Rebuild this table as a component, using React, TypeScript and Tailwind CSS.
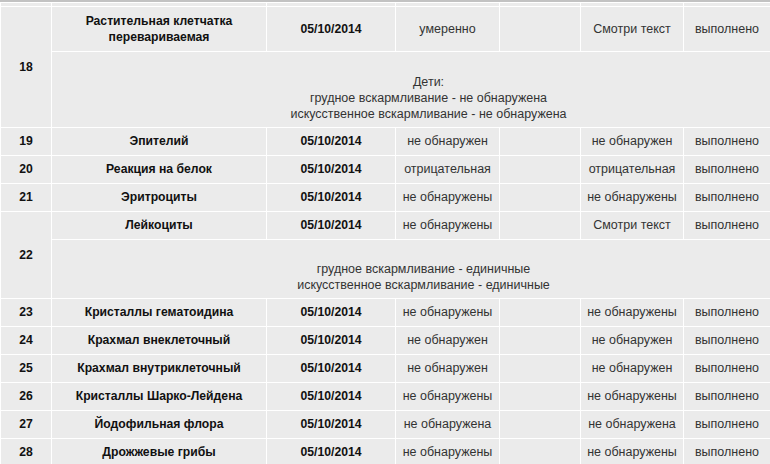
const rows = [
  { n: '19', name: 'Эпителий', res: 'не обнаружен', ref: 'не обнаружен' },
  { n: '20', name: 'Реакция на белок', res: 'отрицательная', ref: 'отрицательная' },
  { n: '21', name: 'Эритроциты', res: 'не обнаружены', ref: 'не обнаружены' },
];

const rows2 = [
  { n: '23', name: 'Кристаллы гематоидина', res: 'не обнаружены', ref: 'не обнаружены' },
  { n: '24', name: 'Крахмал внеклеточный', res: 'не обнаружен', ref: 'не обнаружен' },
  { n: '25', name: 'Крахмал внутриклеточный', res: 'не обнаружен', ref: 'не обнаружен' },
  { n: '26', name: 'Кристаллы Шарко-Лейдена', res: 'не обнаружены', ref: 'не обнаружены' },
  { n: '27', name: 'Йодофильная флора', res: 'не обнаружена', ref: 'не обнаружена' },
  { n: '28', name: 'Дрожжевые грибы', res: 'не обнаружены', ref: 'не обнаружены' },
];

const cell = 'bg-[#ebebeb] p-0 text-center align-middle';
const bold = 'font-bold text-[#111] text-[12.2px]';

function Row({ n, name, res, refVal }: { n: string; name: string; res: string; refVal: string }) {
  return (
    <tr>
      <td className={`${cell} ${bold} h-[27px]`}>{n}</td>
      <td className={`${cell} ${bold}`}>{name}</td>
      <td className={`${cell} ${bold}`}>05/10/2014</td>
      <td className={cell}>{res}</td>
      <td className={cell}></td>
      <td className={cell}>{refVal}</td>
      <td className={cell}>выполнено</td>
    </tr>
  );
}

function Note({ lines, height, shift }: { lines: string[]; height: string; shift: string }) {
  return (
    <tr>
      <td colSpan={6} className={`${cell} ${height} ${shift} leading-[16px]`}>
        <div className="h-[16px]" />
        {lines.map((l, i) => (
          <div key={i}>{l}</div>
        ))}
      </td>
    </tr>
  );
}

export default function App() {
  return (
    <div className="w-[770px] h-[464px] overflow-hidden bg-white font-['Liberation_Sans',Arial,sans-serif] text-[12.5px] text-[#333]">
      <div className="h-[2px] bg-[#c2c2c2]" />
      <table className="border-separate border-spacing-[1px] bg-white table-fixed w-[771px]">
        <colgroup>
          <col className="w-[50px]" />
          <col className="w-[214px]" />
          <col className="w-[128px]" />
          <col className="w-[103px]" />
          <col className="w-[80px]" />
          <col className="w-[102px]" />
          <col className="w-[86px]" />
        </colgroup>
        <tbody>
          <tr>
            <td className={`${cell} h-[3px]`}></td>
            <td className={cell}></td>
            <td className={cell}></td>
            <td className={cell}></td>
            <td className={cell}></td>
            <td className={cell}></td>
            <td className={cell}></td>
          </tr>
          <tr>
            <td rowSpan={2} className={`${cell} ${bold}`}>18</td>
            <td className={`${cell} ${bold} h-[44px] leading-[16px]`}>
              Растительная клетчатка
              <br />
              перевариваемая
            </td>
            <td className={`${cell} ${bold}`}>05/10/2014</td>
            <td className={cell}>умеренно</td>
            <td className={cell}></td>
            <td className={cell}>Смотри текст</td>
            <td className={cell}>выполнено</td>
          </tr>
          <Note
            height="h-[75px]"
            shift="pl-[35px]"
            lines={['Дети:', 'грудное вскармливание - не обнаружена', 'искусственное вскармливание - не обнаружена']}
          />
          {rows.map(r => (
            <Row key={r.n} n={r.n} name={r.name} res={r.res} refVal={r.ref} />
          ))}
          <tr>
            <td rowSpan={2} className={`${cell} ${bold}`}>22</td>
            <td className={`${cell} ${bold} h-[27px]`}>Лейкоциты</td>
            <td className={`${cell} ${bold}`}>05/10/2014</td>
            <td className={cell}>не обнаружены</td>
            <td className={cell}></td>
            <td className={cell}>Смотри текст</td>
            <td className={cell}>выполнено</td>
          </tr>
          <Note
            height="h-[58px]"
            shift="pl-[25px]"
            lines={['грудное вскармливание - единичные', 'искусственное вскармливание - единичные']}
          />
          {rows2.map(r => (
            <Row key={r.n} n={r.n} name={r.name} res={r.res} refVal={r.ref} />
          ))}
        </tbody>
      </table>
    </div>
  );
}
